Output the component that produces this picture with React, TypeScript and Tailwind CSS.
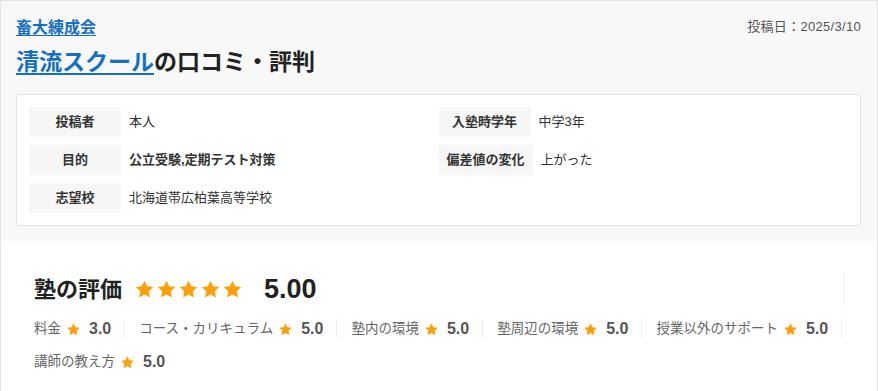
import React from "react";

const Star = ({ size }: { size: number }) => (
  <svg width={size} height={size} viewBox="0 0 24 24" className="shrink-0">
    <path
      d="M12 2l3.09 6.26L22 9.27l-5 4.87 1.18 6.88L12 17.77l-6.18 3.25L7 14.14 2 9.27l6.91-1.01L12 2z"
      fill="#ff9f0a"
    />
  </svg>
);

const rows: [string, string, boolean][] = [
  ["投稿者", "本人", false],
  ["入塾時学年", "中学3年", false],
  ["目的", "公立受験,定期テスト対策", true],
  ["偏差値の変化", "上がった", false],
  ["志望校", "北海道帯広柏葉高等学校", false],
];

const cats: [string, string][] = [
  ["料金", "3.0"],
  ["コース・カリキュラム", "5.0"],
  ["塾内の環境", "5.0"],
  ["塾周辺の環境", "5.0"],
  ["授業以外のサポート", "5.0"],
  ["講師の教え方", "5.0"],
];

export default function App() {
  return (
    <div
      className="w-[878px] h-[391px] overflow-hidden border-l border-t border-r border-[#e4e4e4] bg-white"
      style={{ fontFamily: '"Liberation Sans", "Noto Sans CJK JP", sans-serif' }}
    >
      <div className="bg-[#f8f8f8] pl-[15px] pr-[16px] pt-[15px] pb-[15px]">
        <div className="flex justify-between items-start">
          <a className="text-[16px] leading-[24px] font-bold text-[#1670c0] underline underline-offset-2">
            畜大練成会
          </a>
          <span className="text-[13px] leading-[24px] text-[#555] mt-[-1px] tracking-[0.3px]">投稿日：2025/3/10</span>
        </div>
        <h1 className="mt-[5px] text-[23px] leading-[34px] font-bold text-[#222]">
          <a className="text-[#1670c0] underline underline-offset-[3px] decoration-2">清流スクール</a>
          の口コミ・評判
        </h1>
        <div className="mt-[15px] bg-white border border-[#e4e4e4] p-[12px] grid grid-cols-2 gap-y-[8px]">
          {rows.map(([k, v, b]) => (
            <div key={k} className="flex items-center gap-[8px]">
              <div className="min-w-[92px] h-[30px] px-[8px] bg-[#f6f6f6] flex items-center justify-center text-[13px] font-bold text-[#333]">
                {k}
              </div>
              <div className={b ? "text-[13px] font-bold text-[#333]" : "text-[13px] text-[#333]"}>{v}</div>
            </div>
          ))}
        </div>
      </div>
      <div className="pt-[32px] pl-[33px] pr-[33px]">
        <div className="h-[33px] flex items-center border-r border-[#eeeeee]">
          <span className="text-[22px] font-bold text-[#222] leading-[33px]">塾の評価</span>
          <div className="flex items-center gap-[1px] ml-[12px]">
            <Star size={21} />
            <Star size={21} />
            <Star size={21} />
            <Star size={21} />
            <Star size={21} />
          </div>
          <span className="ml-[21px] text-[27px] font-bold text-[#222] leading-[33px]">5.00</span>
        </div>
        <div className="mt-[13px] flex flex-wrap gap-x-[14px] gap-y-[13px]">
          {cats.map(([k, v], i) => (
            <div
              key={k}
              className={
                i < cats.length - 1
                  ? "h-[20px] flex items-center pr-[13px] border-r border-[#eeeeee]"
                  : "h-[20px] flex items-center"
              }
            >
              <span className="text-[13.5px] text-[#666]">{k}</span>
              <span className="ml-[5px]">
                <Star size={15} />
              </span>
              <span className="ml-[8px] text-[16px] font-bold text-[#555]">{v}</span>
            </div>
          ))}
        </div>
      </div>
    </div>
  );
}
